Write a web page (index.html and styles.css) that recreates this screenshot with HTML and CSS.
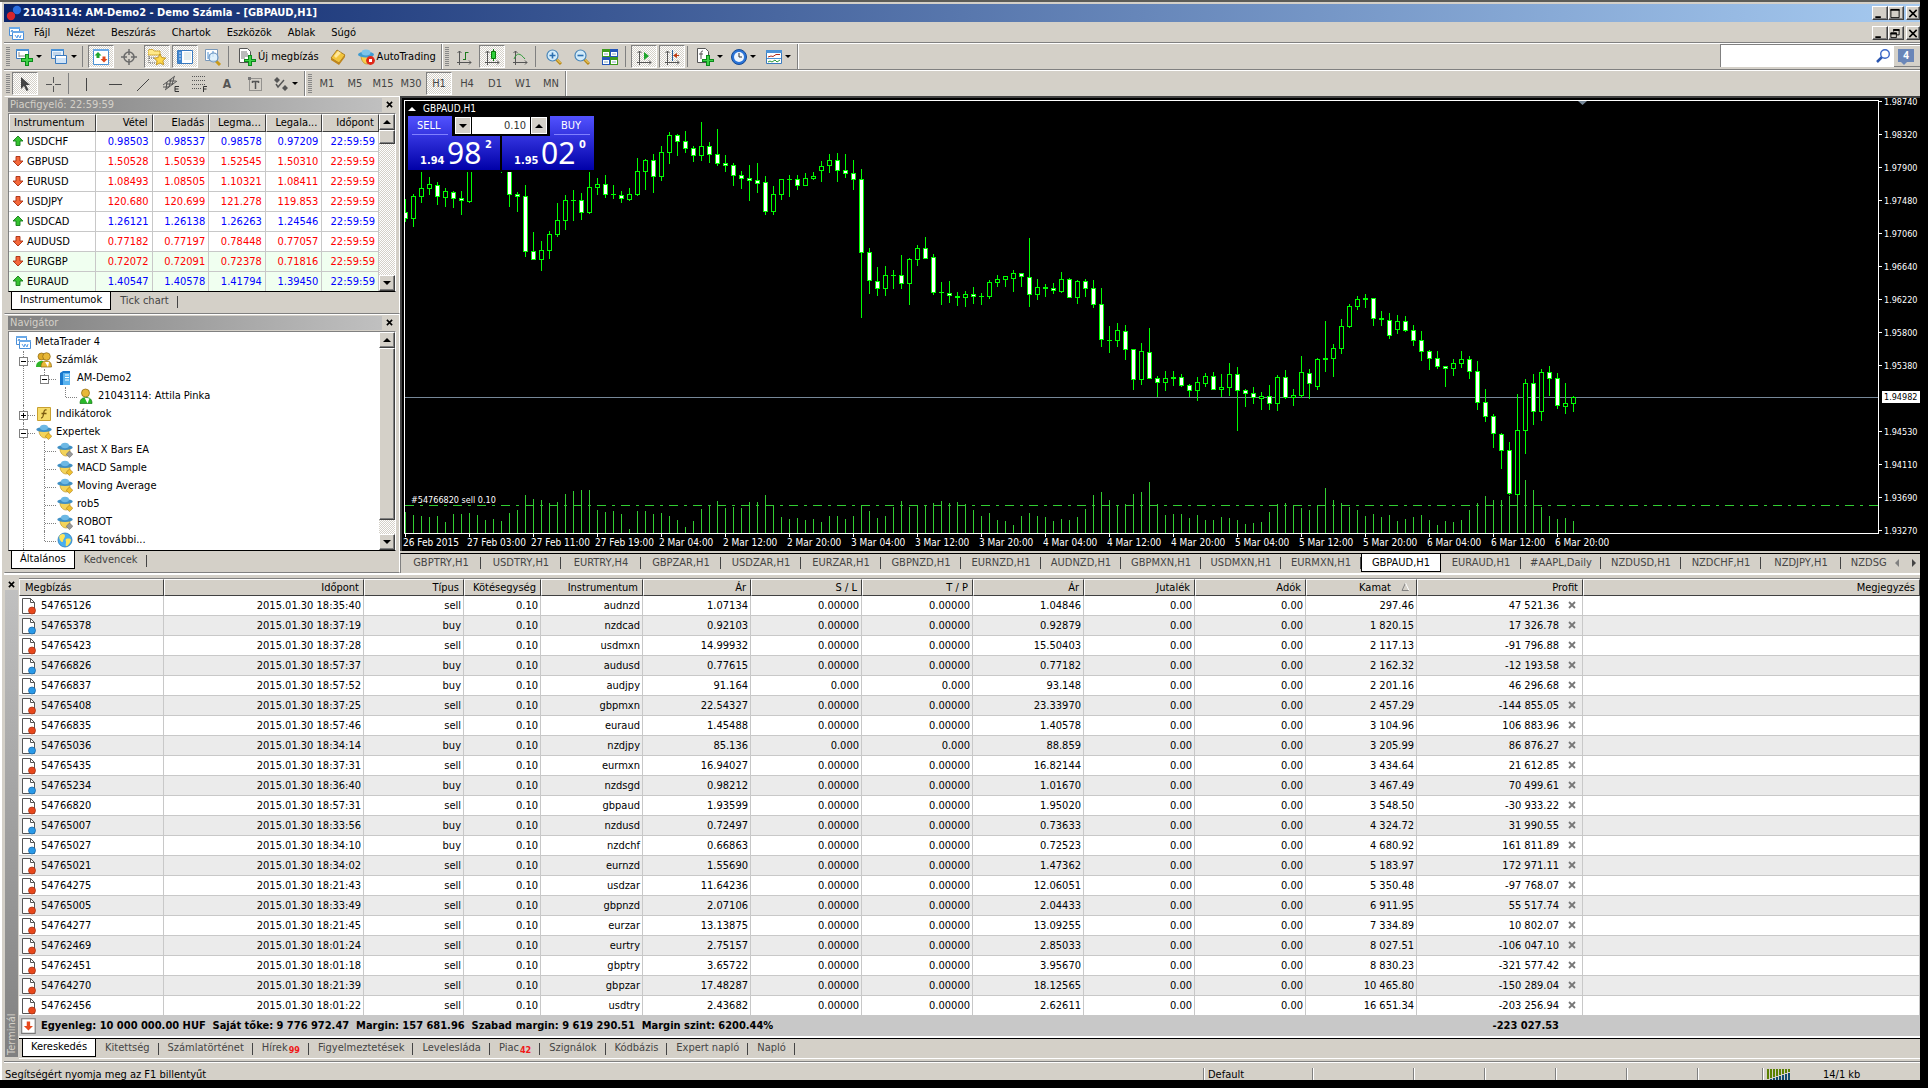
FILE: index.html
```html
<!doctype html>
<html lang="hu">
<head>
<meta charset="UTF-8">
<title>21043114: AM-Demo2 - Demo Számla - [GBPAUD,H1]</title>
<link rel="stylesheet" href="styles.css">
</head>
<body>
<!-- icon set, 16x16 -->
<svg class="sprite" width="0" height="0">
	<symbol id="logo" viewBox="0 0 16 16"><circle cx="11" cy="5" r="4.2" fill="#2a6fe0"/><circle cx="5" cy="11" r="4.2" fill="#d8262c"/></symbol>
	<symbol id="charts" viewBox="0 0 16 16"><path d="M1.5 2.5h10v8h-10z" fill="#fff" stroke="#4a8fd8"/><path d="M1 2h11v2H1z" fill="#6aa9e8"/><path d="M3 7l1-2 2 3 1-2" fill="none" stroke="#4a8fd8"/><path d="M4.5 6.5h11v8h-11z" fill="#fff" stroke="#4a8fd8"/><path d="M4 6h12v2H4z" fill="#6aa9e8"/><path d="M7 10l2 3 1-3 2 3 1-3" fill="none" stroke="#5a9fe8"/></symbol>
	<symbol id="newchart" viewBox="0 0 18 18"><path d="M1.5 1.5h12v9h-12z" fill="#fff" stroke="#3a7abf"/><path d="M1 1h13v2H1z" fill="#4b92d6"/><path d="M4 4v5M4 8h7" stroke="#888" fill="none"/><path d="M10 6h4v4h4v4h-4v4h-4v-4H6v-4h4z" fill="#0a8a1a"/><path d="M11 7h2v4h4v2h-4v4h-2v-4H7v-2h4z" fill="#3fd048"/></symbol>
	<symbol id="profiles" viewBox="0 0 18 18"><path d="M1.5 1.5h12v9h-12z" fill="#e8f3fd" stroke="#3a7abf"/><path d="M1 1h13v2H1z" fill="#4b92d6"/><path d="M3 5h8M3 7h8" stroke="#9ab8d8"/><path d="M5.5 7.5h11v8h-11z" fill="#cfe3f7" stroke="#3a7abf"/><path d="M6 8h10v2H6z" fill="#fff"/></symbol>
	<symbol id="market" viewBox="0 0 16 16"><path d="M.5.5h15v15H.5z" fill="#fff" stroke="#4b92d6"/><path d="M0 0h16v2H0z" fill="#6aa9e8"/><path d="M5 3l3.5 3.5h-2V9h-3V6.500h-2z" fill="#1da52a"/><path d="M11 13.5L7.5 10h2V7.5h3V10h2z" fill="#e0481c"/></symbol>
	<symbol id="data" viewBox="0 0 16 16"><circle cx="8" cy="8" r="5" fill="none" stroke="#6b6b6b" stroke-width="1.5"/><path d="M8 0v6M8 10v6M0 8h6M10 8h6" stroke="#6b6b6b" stroke-width="1.5"/></symbol>
	<symbol id="nav" viewBox="0 0 18 16"><path d="M0 2l1-1.5h4L6 2h6v4H0z" fill="#ffe98a" stroke="#c99a1a" stroke-width=".8"/><path d="M1 7v7h6M1 9h5" stroke="#555" stroke-dasharray="1 1" fill="none"/><path d="M12 5l1.800 3.600 4 .5-2.900 2.700.8 4L12 14l-3.700 1.800.8-4L6.200 9.100l4-.5z" fill="#ffd84a" stroke="#b8860b" stroke-width=".8"/></symbol>
	<symbol id="terminal" viewBox="0 0 16 16"><path d="M.5 1.5h15v13H.5z" fill="#fff" stroke="#3a7abf"/><path d="M1 2h4v12H1z" fill="#3f86d0"/><path d="M7 4h7M7 6h7M7 8h7M7 10h7" stroke="#cdd"/><path d="M2 4h2M2 7h2M2 10h2" stroke="#cfe3f7"/></symbol>
	<symbol id="tester" viewBox="0 0 18 18"><path d="M1.5 1.5h12v11h-12z" fill="#fff" stroke="#7a98b8"/><path d="M4 11V4M6 10V6M9 9V3" stroke="#4b92d6"/><path d="M12 13l4 4" stroke="#c99a1a" stroke-width="3"/><circle cx="9.5" cy="9.5" r="4.5" fill="#d8edfb" fill-opacity=".8" stroke="#6a94c0" stroke-width="1.2"/></symbol>
	<symbol id="order" viewBox="0 0 18 18"><path d="M1.5.5h8l3 3v11h-11z" fill="#fff" stroke="#555"/><path d="M3 4h6M3 6h7M3 8h7M3 10h4" stroke="#777"/><path d="M10 7h4v4h4v3h-4v4h-4v-4H6v-3h4z" fill="#0a8a1a"/><path d="M11 8h2v4h4v1h-4v4h-2v-4H7v-1h4z" fill="#3fd048"/></symbol>
	<symbol id="book" viewBox="0 0 16 16"><path d="M1 9l6-8 8 5-6 8z" fill="#f3c53c" stroke="#9a6a10" stroke-width=".8"/><path d="M1 9l8 5 6-8v2l-6 8-8-5z" fill="#c08418"/><path d="M4 7l4-5 3 2-5 5z" fill="#ffe79a"/></symbol>
	<symbol id="auto" viewBox="0 0 18 16"><path d="M4 6c0 6 3 9 6 9s5-3 5-9z" fill="#f6cf4e" stroke="#b98a1a" stroke-width=".7"/><ellipse cx="9" cy="5.5" rx="8" ry="3" fill="#3f9bd0"/><ellipse cx="9" cy="3.5" rx="4.5" ry="3" fill="#7cc4ea"/><circle cx="13.5" cy="11.5" r="4.4" fill="#e02818"/><path d="M12 10h3v3h-3z" fill="#fff"/></symbol>
	<symbol id="bars" viewBox="0 0 16 16"><path d="M3.5 2v14M1 13.5h14M1.5 4l2-2 2 2M13 11.5l2 2-2 2" fill="none" stroke="#555"/><path d="M9.5 3v8M9.5 3.5h3M7 10.5h3" stroke="#1c7a1c" fill="none"/></symbol>
	<symbol id="candles" viewBox="0 0 16 16"><path d="M3.5 2v14M1 13.5h14M1.5 4l2-2 2 2M13 11.5l2 2-2 2" fill="none" stroke="#555"/><path d="M9.5 0v12" stroke="#0a7a0a"/><path d="M7.5 2.5h4v7h-4z" fill="#2fd03a" stroke="#0a7a0a"/></symbol>
	<symbol id="line" viewBox="0 0 16 16"><path d="M3.5 2v14M1 13.5h14M1.5 4l2-2 2 2M13 11.5l2 2-2 2" fill="none" stroke="#555"/><path d="M2 10c3-7 6-6 11 0" fill="none" stroke="#2c9a35"/></symbol>
	<symbol id="zoomin" viewBox="0 0 16 16"><path d="M10 10l5 5" stroke="#b98a1a" stroke-width="3"/><path d="M10.5 10l4 4" stroke="#ffe27a"/><circle cx="6.5" cy="6.5" r="5.5" fill="#d3ecfb" stroke="#4a86b8" stroke-width="1.2"/><path d="M3.5 6.5h6M6.5 3.5v6" stroke="#2a6fb0" stroke-width="1.6"/></symbol>
	<symbol id="zoomout" viewBox="0 0 16 16"><path d="M10 10l5 5" stroke="#b98a1a" stroke-width="3"/><path d="M10.5 10l4 4" stroke="#ffe27a"/><circle cx="6.5" cy="6.5" r="5.5" fill="#d3ecfb" stroke="#4a86b8" stroke-width="1.2"/><path d="M3.5 6.5h6" stroke="#2a6fb0" stroke-width="1.6"/></symbol>
	<symbol id="tile" viewBox="0 0 16 16"><path d="M0 0h8v8H0zM8 8h8v8H8z" fill="#3c9a1e"/><path d="M8 0h8v8H8zM0 8h8v8H0z" fill="#2456b8"/><path d="M1 3h6v4H1zM9 3h6v4H9zM1 11h6v4H1zM9 11h6v4H9z" fill="#fff"/><path d="M2 5h4M10 5h4M2 13h4M10 13h4" stroke="#8ab"/></symbol>
	<symbol id="scroll" viewBox="0 0 16 16"><path d="M3.5 2v14M1 13.5h14M1.5 4l2-2 2 2M13 11.5l2 2-2 2" fill="none" stroke="#555"/><path d="M8 3l5 4-5 4z" fill="#1da52a"/></symbol>
	<symbol id="shift" viewBox="0 0 16 16"><path d="M3.5 2v14M1 13.5h14M1.5 4l2-2 2 2M13 11.5l2 2-2 2" fill="none" stroke="#555"/><path d="M8.5 1v11" stroke="#2a5f9a"/><path d="M15 6.5h-3" stroke="#c03a10"/><path d="M13 4l-4 2.500 4 2.500z" fill="#c03a10"/></symbol>
	<symbol id="indicators" viewBox="0 0 18 18"><path d="M1.5.5h8l3 3v11h-11z" fill="#fff" stroke="#555"/><path d="M7 3c-2 0-2 1-2 3v5M3 6h4" fill="none" stroke="#555"/><path d="M10 7h4v4h4v3h-4v4h-4v-4H6v-3h4z" fill="#0a8a1a"/><path d="M11 8h2v4h4v1h-4v4h-2v-4H7v-1h4z" fill="#3fd048"/></symbol>
	<symbol id="clock" viewBox="0 0 16 16"><circle cx="8" cy="8" r="7.5" fill="#2a74d8" stroke="#164a94"/><circle cx="8" cy="8" r="5" fill="#eef6ff"/><path d="M8 4v4h3" fill="none" stroke="#333"/></symbol>
	<symbol id="template" viewBox="0 0 16 16"><path d="M.5 1.5h15v13H.5z" fill="#fff" stroke="#3a7abf"/><path d="M0 1h16v3H0z" fill="#4b92d6"/><path d="M2 8l3-1 2 .5 3-2h4" fill="none" stroke="#b02a1a"/><path d="M1 9.5h14" stroke="#4b92d6"/><path d="M2 13l2-1 2 1 3-2 2 2 3-2" fill="none" stroke="#2c9a35"/></symbol>
	<symbol id="pointer" viewBox="0 0 16 16"><path d="M4 1v12l3-3 2.500 5 2-1L9 9h4z" fill="#444"/></symbol>
	<symbol id="cross" viewBox="0 0 16 16"><path d="M8.5 1v6M8.5 10v6M1 8.5h6M10 8.5h6" stroke="#555"/></symbol>
	<symbol id="vline" viewBox="0 0 16 16"><path d="M7.5 2v13" stroke="#444"/></symbol>
	<symbol id="hline" viewBox="0 0 16 16"><path d="M2 8.5h13" stroke="#444"/></symbol>
	<symbol id="trend" viewBox="0 0 16 16"><path d="M2 15L14 3" stroke="#444"/></symbol>
	<symbol id="channel" viewBox="0 0 18 18"><path d="M1 10L13 1M3 15L15 6M4 14l1-7M7 12l2-8M10 10l2-8M1 12h6M4 9h7M7 6h7" stroke="#555"/><path d="M17 11.5h-4v5h4M13 14h3.5" fill="none" stroke="#333"/></symbol>
	<symbol id="fibo" viewBox="0 0 18 18"><path d="M2 1.5h14M2 5.5h14M2 9.5h14M2 13.5h9" stroke="#555" stroke-dasharray="1 1"/><path d="M13.5 17v-5.5H17M13 14h3.5" fill="none" stroke="#333"/></symbol>
	<symbol id="label" viewBox="0 0 16 16"><path d="M2.5 2.5h12v12h-12z" fill="none" stroke="#555" stroke-dasharray="1 1"/><path d="M1 1h3v3H1z" fill="#777"/><path d="M5 5.5h7M8.5 5v8M5.5 5v2M11.5 5v2" stroke="#555" stroke-width="1.5"/></symbol>
	<symbol id="arrows" viewBox="0 0 16 16"><path d="M1 4l3-3 3 3-3 3zM9 12l3-3 3 3-3 3z" fill="#555"/><path d="M3 8l2 3 6-7" stroke="#555" fill="none" stroke-width="1.4"/></symbol>
	<symbol id="up" viewBox="0 0 12 12"><path d="M6 1l5 5H8v4.500H4V6H1z" fill="#35c22f" stroke="#157a1a" stroke-width=".9"/></symbol>
	<symbol id="down" viewBox="0 0 12 12"><path d="M6 11L1 6h3V1.500h4V6h3z" fill="#f4683a" stroke="#a82c10" stroke-width=".9"/></symbol>
	<symbol id="users" viewBox="0 0 16 16"><path d="M0 15c0-4 2-5 4-6h3v6z" fill="#2fb52a"/><circle cx="5.5" cy="4.5" r="3.5" fill="#e0ac28" stroke="#8a6410" stroke-width=".7"/><path d="M5 15c0-5 2-6 5.500-6s5 2 5 6z" fill="#e8b838" stroke="#8a6410" stroke-width=".7"/><circle cx="10.5" cy="4.5" r="3.8" fill="#e8b838" stroke="#8a6410" stroke-width=".7"/><path d="M9 10l3 5 1-5z" fill="#fff"/></symbol>
	<symbol id="server" viewBox="0 0 16 16"><path d="M3 3l3-2h7v12l-2 2H3z" fill="#1a78cc"/><path d="M6 3h7v12H6z" fill="#5ab4f0"/><path d="M8 5h4M8 7.5h4M8 10h4" stroke="#fff"/></symbol>
	<symbol id="user" viewBox="0 0 16 16"><path d="M2 15.5c0-4 2-6 6-6s6 2 6 6z" fill="#28b828" stroke="#147a14" stroke-width=".7"/><path d="M6.5 9.5l3 6 2-5z" fill="#fff"/><circle cx="7.5" cy="5" r="4" fill="#e8b838" stroke="#8a6410" stroke-width=".7"/></symbol>
	<symbol id="func" viewBox="0 0 16 16"><path d="M1.5 1.5h13v13h-13z" fill="#f6dc6a" stroke="#c8a030"/><path d="M10.5 4c-2-.5-2.500.5-3 4s-1 4-2.500 4M5.500 7.500h5" fill="none" stroke="#7a5a10" stroke-width="1.3"/></symbol>
	<symbol id="expert" viewBox="0 0 16 16"><path d="M3 7c0 4 3 7 6 7s4-3 4-7z" fill="#f3d35a" stroke="#b98a1a" stroke-width=".6"/><ellipse cx="8" cy="5.5" rx="7.7" ry="2.5" fill="#3f8fc4"/><ellipse cx="8" cy="3.5" rx="4" ry="2.7" fill="#6cb8e4"/><path d="M12.500 9l3.300 3.300-3.300 3.300-3.300-3.300z" fill="#f0c030" stroke="#a87a10" stroke-width=".6"/></symbol>
	<symbol id="expert-off" viewBox="0 0 16 16"><path d="M3 7c0 4 3 7 6 7s4-3 4-7z" fill="#f3d35a" stroke="#b98a1a" stroke-width=".6"/><ellipse cx="8" cy="5.5" rx="7.7" ry="2.5" fill="#3f8fc4"/><ellipse cx="8" cy="3.5" rx="4" ry="2.7" fill="#6cb8e4"/><path d="M12.500 9l3.300 3.300-3.300 3.300-3.300-3.300z" fill="#999" stroke="#666" stroke-width=".6"/></symbol>
	<symbol id="globe" viewBox="0 0 16 16"><circle cx="8" cy="8" r="7" fill="#48aef0" stroke="#2a7ab8" stroke-width=".8"/><path d="M3 3c3-2 5-1 5 1S6 7 6 9s-2 1-3-1-1-4 0-5zM9 7c3-1 5 0 5 1s-2 5-4 6-1-3-1-4-1-2 0-3z" fill="#ffe45a"/></symbol>
	<symbol id="folder" viewBox="0 0 16 16"><path d="M1 1h10v5H1z" fill="#d8a030"/></symbol>
	<symbol id="sell" viewBox="0 0 16 18"><path d="M1.5 1.5h8l4 4v11h-12z" fill="#fff" stroke="#555"/><path d="M9.5 1.5v4h4" fill="none" stroke="#555"/><circle cx="11" cy="13.5" r="3.5" fill="#e8481c" stroke="#a02c10" stroke-width=".7"/></symbol>
	<symbol id="buy" viewBox="0 0 16 18"><path d="M1.5 1.5h8l4 4v11h-12z" fill="#fff" stroke="#555"/><path d="M9.5 1.5v4h4" fill="none" stroke="#555"/><circle cx="11" cy="13.5" r="3.5" fill="#2a9ae8" stroke="#1460a0" stroke-width=".7"/></symbol>
	<symbol id="balance" viewBox="0 0 14 16"><path d="M.5 1.5h12v13H.5z" fill="#fff" stroke="#777"/><path d="M6.500 12l-4-4H5V4h3v4h2.500z" fill="#e8481c"/></symbol>
	<symbol id="search" viewBox="0 0 16 16"><path d="M7 9l-5 5" stroke="#2a56b0" stroke-width="2.5"/><circle cx="10" cy="6" r="4.3" fill="#fff" stroke="#3a66c8" stroke-width="1.4"/></symbol>
	<symbol id="x" viewBox="0 0 8 8"><path d="M1 1l6 6M7 1L1 7" stroke="currentColor" stroke-width="1.8"/></symbol>
	<symbol id="tri-up" viewBox="0 0 8 8"><path d="M0 6l4-4 4 4z" fill="currentColor"/></symbol>
	<symbol id="tri-down" viewBox="0 0 8 8"><path d="M0 2l4 4 4-4z" fill="currentColor"/></symbol>
	<symbol id="tri-left" viewBox="0 0 8 8"><path d="M6 0L2 4l4 4z" fill="currentColor"/></symbol>
	<symbol id="tri-right" viewBox="0 0 8 8"><path d="M2 0l4 4-4 4z" fill="currentColor"/></symbol>
	<symbol id="sort" viewBox="0 0 9 9"><path d="M4.5 1L1 8.500h7" fill="none" stroke="#808080"/><path d="M4.500 1L8 8.500" stroke="#fff"/></symbol>
	<symbol id="min" viewBox="0 0 12 12"><path d="M2 9h6v2H2z"/></symbol>
	<symbol id="max" viewBox="0 0 12 12"><path d="M1.5 2v8.500h9V2" fill="none" stroke="#000"/><path d="M1 1h10v2H1z"/></symbol>
	<symbol id="restore" viewBox="0 0 12 12"><path d="M4.5 4V2.500h6v5H8M1.500 5.500h6v5h-6z" fill="none" stroke="#000"/><path d="M4 1h7v2H4zM1 5h7v2H1z"/></symbol>
	<symbol id="close" viewBox="0 0 12 12"><path d="M2 2l8 8M10 2l-8 8" stroke="#000" stroke-width="1.7"/></symbol>
</svg>

<div class="app">
	<header class="titlebar">
		<svg class="ico"><use href="#logo"/></svg>
		<h1>21043114: AM-Demo2 - Demo Számla - [GBPAUD,H1]</h1>
		<div class="winbtns">
			<button aria-label="Kis méret"><svg><use href="#min"/></svg></button>
			<button aria-label="Teljes méret"><svg><use href="#max"/></svg></button>
			<button aria-label="Bezárás"><svg><use href="#close"/></svg></button>
		</div>
	</header>
	<nav class="menu">
		<svg class="ico"><use href="#charts"/></svg>
		<button>Fájl</button><button>Nézet</button><button>Beszúrás</button><button>Chartok</button><button>Eszközök</button><button>Ablak</button><button>Súgó</button>
		<div class="winbtns">
			<button aria-label="Kis méret"><svg><use href="#min"/></svg></button>
			<button aria-label="Visszaállítás"><svg><use href="#restore"/></svg></button>
			<button aria-label="Bezárás"><svg><use href="#close"/></svg></button>
		</div>
	</nav>

	<div class="bars">
		<div class="toolbar">
			<div class="group">
				<i class="grip"></i>
				<button class="tool drop" aria-label="Új chart"><svg class="big"><use href="#newchart"/></svg></button>
				<button class="tool drop" aria-label="Profilok"><svg class="big"><use href="#profiles"/></svg></button>
				<i class="sep"></i>
				<button class="tool on" aria-label="Piacfigyelő"><svg><use href="#market"/></svg></button>
				<button class="tool" aria-label="Adatablak"><svg><use href="#data"/></svg></button>
				<button class="tool on" aria-label="Navigátor"><svg class="big"><use href="#nav"/></svg></button>
				<button class="tool on" aria-label="Terminál"><svg><use href="#terminal"/></svg></button>
				<button class="tool" aria-label="Tesztelő"><svg class="big"><use href="#tester"/></svg></button>
				<i class="sep"></i>
				<button class="tool text"><svg class="big"><use href="#order"/></svg>Új megbízás</button>
				<button class="tool" aria-label="MetaEditor"><svg><use href="#book"/></svg></button>
				<button class="tool text"><svg class="big"><use href="#auto"/></svg>AutoTrading</button>
			</div>
			<div class="group">
				<i class="grip"></i>
				<button class="tool" aria-label="Oszlopok"><svg><use href="#bars"/></svg></button>
				<button class="tool on" aria-label="Gyertyák"><svg><use href="#candles"/></svg></button>
				<button class="tool" aria-label="Vonal"><svg><use href="#line"/></svg></button>
				<i class="sep"></i>
				<button class="tool" aria-label="Nagyítás"><svg><use href="#zoomin"/></svg></button>
				<button class="tool" aria-label="Kicsinyítés"><svg><use href="#zoomout"/></svg></button>
				<button class="tool" aria-label="Mozaik"><svg><use href="#tile"/></svg></button>
				<i class="sep"></i>
				<button class="tool on" aria-label="Automata görgetés"><svg><use href="#scroll"/></svg></button>
				<button class="tool on" aria-label="Chart eltolás"><svg><use href="#shift"/></svg></button>
				<i class="sep"></i>
				<button class="tool drop" aria-label="Indikátorok"><svg class="big"><use href="#indicators"/></svg></button>
				<button class="tool drop" aria-label="Időtávok"><svg><use href="#clock"/></svg></button>
				<button class="tool drop" aria-label="Sablonok"><svg><use href="#template"/></svg></button>
			</div>
			<div class="search">
				<input type="text" aria-label="Keresés">
				<svg class="ico"><use href="#search"/></svg>
				<button class="chat"><span>4</span></button>
			</div>
		</div>
		<div class="toolbar">
			<div class="group">
				<i class="grip"></i>
				<button class="tool on" aria-label="Kurzor"><svg><use href="#pointer"/></svg></button>
				<button class="tool" aria-label="Célkereszt"><svg><use href="#cross"/></svg></button>
				<i class="sep"></i>
				<button class="tool" aria-label="Függőleges vonal"><svg><use href="#vline"/></svg></button>
				<button class="tool" aria-label="Vízszintes vonal"><svg><use href="#hline"/></svg></button>
				<button class="tool" aria-label="Trendvonal"><svg><use href="#trend"/></svg></button>
				<button class="tool" aria-label="Csatorna"><svg class="big"><use href="#channel"/></svg></button>
				<button class="tool" aria-label="Fibonacci"><svg class="big"><use href="#fibo"/></svg></button>
				<button class="tool letter">A</button>
				<button class="tool" aria-label="Felirat"><svg><use href="#label"/></svg></button>
				<button class="tool drop" aria-label="Nyilak"><svg><use href="#arrows"/></svg></button>
			</div>
			<div class="group periods">
				<i class="grip"></i>
				<button class="tool">M1</button><button class="tool">M5</button><button class="tool">M15</button><button class="tool">M30</button><button class="tool on">H1</button><button class="tool">H4</button><button class="tool">D1</button><button class="tool">W1</button><button class="tool">MN</button>
			</div>
		</div>
	</div>

	<div class="workspace">
		<aside class="dock">
			<section class="panel">
				<header class="caption"><h2>Piacfigyelő: 22:59:59</h2><button aria-label="Bezárás"><svg><use href="#x"/></svg></button></header>
				<div class="well">
					<table class="quotes">
						<colgroup><col class="sym"><col><col><col><col><col></colgroup>
						<thead><tr><th>Instrumentum</th><th>Vétel</th><th>Eladás</th><th>Legma...</th><th>Legala...</th><th>Időpont</th></tr></thead>
						<tbody id="quotes"></tbody>
					</table>
					<div class="scrollbar"><button aria-label="Fel"><svg><use href="#tri-up"/></svg></button><i class="thumb small"></i><button class="end" aria-label="Le"><svg><use href="#tri-down"/></svg></button></div>
				</div>
				<div class="tabs"><button class="active">Instrumentumok</button><button>Tick chart</button></div>
			</section>
			<section class="panel grow">
				<header class="caption"><h2>Navigátor</h2><button aria-label="Bezárás"><svg><use href="#x"/></svg></button></header>
				<div class="well">
					<div class="tree">
						<div class="node"><svg class="ico"><use href="#charts"/></svg>MetaTrader 4</div>
						<ul>
							<li><div class="node"><button class="exp" aria-label="Bezár"></button><svg class="ico"><use href="#users"/></svg>Számlák</div>
								<ul>
									<li><div class="node"><button class="exp" aria-label="Bezár"></button><svg class="ico"><use href="#server"/></svg>AM-Demo2</div>
										<ul><li><div class="node"><svg class="ico"><use href="#user"/></svg>21043114: Attila Pinka</div></li></ul>
									</li>
								</ul>
							</li>
							<li><div class="node"><button class="exp plus" aria-label="Kinyit"></button><svg class="ico"><use href="#func"/></svg>Indikátorok</div></li>
							<li><div class="node"><button class="exp" aria-label="Bezár"></button><svg class="ico"><use href="#expert"/></svg>Expertek</div>
								<ul>
									<li><div class="node"><svg class="ico"><use href="#expert-off"/></svg>Last X Bars EA</div></li>
									<li><div class="node"><svg class="ico"><use href="#expert"/></svg>MACD Sample</div></li>
									<li><div class="node"><svg class="ico"><use href="#expert"/></svg>Moving Average</div></li>
									<li><div class="node"><svg class="ico"><use href="#expert"/></svg>rob5</div></li>
									<li><div class="node"><svg class="ico"><use href="#expert-off"/></svg>ROBOT</div></li>
									<li><div class="node"><svg class="ico"><use href="#globe"/></svg>641 további...</div></li>
								</ul>
							</li>
							<li><div class="node"><svg class="ico"><use href="#folder"/></svg></div></li>
						</ul>
					</div>
					<div class="scrollbar"><button aria-label="Fel"><svg><use href="#tri-up"/></svg></button><i class="thumb"></i><button class="end" aria-label="Le"><svg><use href="#tri-down"/></svg></button></div>
				</div>
				<div class="tabs"><button class="active">Általános</button><button>Kedvencek</button></div>
			</section>
		</aside>

		<main class="charts">
			<div class="chart">
				<div class="plot">
					<svg id="plot"></svg>
					<div class="symbol"><svg><use href="#tri-up"/></svg>GBPAUD,H1</div>
					<div class="oneclick">
						<button class="deal sell"><span>SELL</span><b>1.94</b><em>98</em><sup>2</sup></button>
						<button class="deal buy"><span>BUY</span><b>1.95</b><em>02</em><sup>0</sup></button>
						<div class="volume">
							<button aria-label="Kevesebb"><svg><use href="#tri-down"/></svg></button>
							<input type="text" value="0.10" aria-label="Mennyiség">
							<button aria-label="Több"><svg><use href="#tri-up"/></svg></button>
						</div>
					</div>
				</div>
				<svg id="prices"></svg>
				<svg id="times"></svg>
			</div>
			<div class="charttabs">
				<div class="strip" id="charttabs"></div>
				<div class="arrows"><button class="off" aria-label="Balra"><svg><use href="#tri-left"/></svg></button><button aria-label="Jobbra"><svg><use href="#tri-right"/></svg></button></div>
			</div>
		</main>
	</div>

	<section class="terminal">
		<div class="side"><button aria-label="Bezárás"><svg><use href="#x"/></svg></button><h2>Terminál</h2></div>
		<div class="content">
			<table class="trades">
				<colgroup><col class="c1"><col class="c2"><col class="c3"><col class="c4"><col class="c5"><col class="c6"><col class="c7"><col class="c7"><col class="c7"><col class="c7"><col class="c7"><col class="c7"><col class="c8"><col></colgroup>
				<thead><tr><th>Megbízás</th><th>Időpont</th><th>Típus</th><th>Kötésegység</th><th>Instrumentum</th><th>Ár</th><th>S / L</th><th>T / P</th><th>Ár</th><th>Jutalék</th><th>Adók</th><th>Kamat<svg class="sort"><use href="#sort"/></svg></th><th>Profit</th><th>Megjegyzés</th></tr></thead>
				<tbody id="trades"></tbody>
				<tfoot><tr><td colspan="12"><div class="cell"><svg class="ico"><use href="#balance"/></svg>Egyenleg: 10 000 000.00 HUF&nbsp; Saját tőke: 9 776 972.47&nbsp; Margin: 157 681.96&nbsp; Szabad margin: 9 619 290.51&nbsp; Margin szint: 6200.44%</div></td><td class="total">-223 027.53</td><td></td></tr></tfoot>
			</table>
			<div class="tabs"><button class="active">Kereskedés</button><button>Kitettség</button><button>Számlatörténet</button><button>Hírek<sub>99</sub></button><button>Figyelmeztetések</button><button>Levelesláda</button><button>Piac<sub>42</sub></button><button>Szignálok</button><button>Kódbázis</button><button>Expert napló</button><button>Napló</button></div>
		</div>
	</section>

	<footer class="status">
		<span class="help">Segítségért nyomja meg az F1 billentyűt</span>
		<span class="w1">Default</span><span class="w2"></span><span class="w3"></span><span class="w3"></span><span class="w3"></span><span class="w3"></span><span class="w4"></span>
		<span class="net"><svg id="signal"></svg>14/1 kb</span>
	</footer>
</div>
<script src="script.js"></script>
</body>
</html>
```
FILE: styles.css
```css
*{box-sizing:border-box}
body{
	margin:0;
	padding:0 8px 8px 0;
	background:#000;
	color:#000;
	font:11px/14px "DejaVu Sans Condensed","Noto Sans",sans-serif;
}
button,input{font:inherit;color:inherit;margin:0;padding:0;border:0;background:none;border-radius:0}
h1,h2,ul{margin:0;padding:0;font:inherit;list-style:none}
.sprite{display:block;position:absolute}
.ico{width:16px;height:16px;flex:none}
.app{
	height:calc(100vh - 8px);
	min-height:1000px;
	display:flex;
	flex-direction:column;
	background:#d4d0c8;
	border-top:2px solid #5c5c58;
	padding:2px 0 0 4px;
	box-shadow:inset 2px 0 0 #fff;
	overflow:hidden;
}

/* title and menu */
.titlebar{
	height:18px;
	flex:none;
	display:flex;
	align-items:center;
	padding-left:2px;
	background:linear-gradient(90deg,#0a246a,#a6caf0);
	color:#fff;
	font-weight:bold;
}
.titlebar h1{flex:1;padding-left:1px}
.winbtns{display:flex;margin-left:auto}
.winbtns button{
	width:16px;height:14px;
	background:#d4d0c8;
	border:1px solid;
	border-color:#fff #404040 #404040 #fff;
	box-shadow:inset -1px -1px #808080;
}
.winbtns button:last-child{margin-left:2px;width:14px}
.winbtns svg{display:block;width:12px;height:11px}
.menu{height:20px;flex:none;display:flex;align-items:center;padding:2px 0 0 4px}
.menu .ico{margin-right:2px}
.menu>button{padding:0 8px}

/* toolbars */
.bars{flex:none;border-top:1px solid #808080}
.toolbar{display:flex;height:27px;border-top:1px solid #fff;border-bottom:1px solid #808080}
.toolbar:last-child{height:26px;border-bottom:0}
.group{
	display:flex;
	align-items:center;
	gap:2px;
	padding:0 1px 0 2px;
	border-right:1px solid #808080;
	box-shadow:1px 0 #fff;
	margin-right:1px;
}
.grip{width:4px;height:20px;background:repeating-linear-gradient(#888 0 1px,#d4d0c8 1px 2px)}
.sep{width:1px;height:21px;background:#808080;margin-right:3px}
.tool{
	width:26px;height:23px;
	display:flex;
	align-items:center;
	justify-content:center;
	border:1px solid transparent;
}
.tool svg{width:16px;height:16px;flex:none}
.tool svg.big{width:18px;height:18px}
.tool.on{
	border-color:#808080 #fff #fff #808080;
	background:repeating-conic-gradient(#fff 0 25%,#d4d0c8 0 50%) 0 0/2px 2px;
}
.tool.text{width:auto;padding:0 3px;gap:2px}
.tool.drop{width:33px;justify-content:flex-start;padding-left:2px;gap:3px}
.tool.drop:after{content:"";border:3px solid transparent;border-top-color:#000;border-bottom:0}
.tool.letter{font-weight:bold;font-size:12px;color:#555}
.periods{color:#444}
.search{
	margin-left:auto;
	display:flex;
	align-items:center;
	width:200px;height:23px;
	background:#fff;
	border-left:1px solid #808080;
	border-top:1px solid #808080;
}
.search input{flex:1;min-width:0;outline:0}
.search .ico{margin-right:3px}
.chat{width:26px;height:21px;background:#d4d0c8;border-bottom:1px solid #808080;padding:2px 4px}
.chat span{display:block;position:relative;width:16px;height:13px;background:#6a86b8;color:#fff;font:bold 10px/13px "Noto Sans",sans-serif}
.chat span:after{content:"";position:absolute;left:3px;top:13px;border:3px solid transparent;border-top-color:#6a86b8;border-bottom:0}

/* docked panels */
.workspace{flex:1;min-height:0;display:flex;border-bottom:2px solid #fff}
.dock{width:396px;flex:none;display:flex;flex-direction:column}
.panel{
	display:flex;
	flex-direction:column;
	padding:1px 3px;
	border:1px solid #808080;
	border-color:#fff #fff #808080 transparent;
}
.grow{flex:1;min-height:0}
.caption{display:flex;height:14px;margin-bottom:1px}
.caption h2{
	flex:1;
	padding-left:2px;
	color:#d4d0c8;
	background:linear-gradient(90deg,#808080,#c0c0c0);
}
.caption button{width:14px}
.caption svg{width:7px;height:7px}
.well{
	flex:1;
	min-height:0;
	display:flex;
	background:#fff;
	border:1px solid #808080;
	border-right-color:#fff;
	border-bottom-color:#000;
}
table{border-collapse:separate;border-spacing:0;table-layout:fixed}
th,td{white-space:nowrap;overflow:hidden;text-align:right;padding:0 2px;font-weight:normal}
th:first-child,td:first-child{text-align:left}
th{
	height:17px;
	line-height:14px;
	background:#d4d0c8;
	border:1px solid;
	border-color:#fff #404040 #404040 #fff;
}
.quotes{width:372px;flex:1}
.sym{width:87px}
.quotes th{height:18px;padding:0 4px}
.quotes td{height:20px;padding:0 3px;border-right:1px solid #c8c8c8;border-bottom:1px solid #c8c8c8}
.quotes tr:last-child td{height:19px;border-bottom:0}
.quotes .up td{color:#00f}
.quotes .down td{color:#f00}
.quotes tr td:first-child{color:#000}
.quotes .tint{background:#f0fff0}
.quotes svg{width:12px;height:12px;vertical-align:-2px;margin-right:3px}
.scrollbar{
	width:16px;flex:none;
	display:flex;
	flex-direction:column;
	background:repeating-conic-gradient(#fff 0 25%,#d4d0c8 0 50%) 0 0/2px 2px;
}
.scrollbar button,.thumb{
	height:16px;flex:none;
	background:#d4d0c8;
	border:1px solid;
	border-color:#fff #404040 #404040 #fff;
	box-shadow:inset -1px -1px #808080;
}
.scrollbar svg{display:block;width:8px;height:8px;margin:auto}
.thumb{height:79%}
.thumb.small{height:14px}
.scrollbar .end{margin-top:auto}

/* tab strips */
.tabs{display:flex;height:20px;padding-left:3px;align-items:flex-start;color:#444}
.tabs button{padding:0 9px;height:18px;position:relative;white-space:nowrap}
.tabs button:not(.active):after{content:"";position:absolute;right:0;top:4px;width:1px;height:12px;background:#444}
.tabs .active{background:#fff;color:#000;border:1px solid #000;border-top:0;padding:0 8px 2px}
.tabs sub{color:#f01818;font:bold 9px/9px "DejaVu Sans Condensed",sans-serif;vertical-align:-2px;margin-left:1px}

/* navigator tree */
.tree{flex:1;overflow:hidden;padding:1px 0 0 6px}
.node{position:relative;display:flex;align-items:center;gap:4px;height:18px}
.tree ul{margin-left:8px}
.tree li{position:relative;padding-left:13px}
.tree li:before{content:"";position:absolute;left:0;top:0;bottom:0;border-left:1px dotted #808080}
.tree li:last-child:before{bottom:auto;height:10px}
.tree li>.node:before{content:"";position:absolute;left:-12px;width:11px;top:10px;border-top:1px dotted #808080}
.exp{
	position:absolute;
	left:-17px;top:6px;
	width:9px;height:9px;
	background:linear-gradient(#000,#000) center/5px 1px no-repeat,#fff;
	border:1px solid #808080;
}
.exp.plus{background:linear-gradient(#000,#000) center/5px 1px no-repeat,linear-gradient(#000,#000) center/1px 5px no-repeat,#fff}

/* chart */
.charts{flex:1;min-width:0;display:flex;flex-direction:column}
.chart{
	flex:1;
	min-height:0;
	display:grid;
	grid-template:minmax(0,1fr) 17px/minmax(0,1fr) 41px;
	background:#000;
	border:2px solid #404040;
	border-width:2px 0 0 2px;
	padding:2px 0 0 2px;
	font-size:10px;
	color:#fff;
}
.plot{position:relative;border:1px solid #fff;overflow:hidden}
.chart svg{display:block}
#plot,#prices,#times{width:100%;height:100%}
#plot,#prices{font-size:9px}
#prices{overflow:visible}
#times{grid-column:1/3;overflow:visible}
.chart text{fill:#fff}
.symbol{position:absolute;left:3px;top:1px;display:flex;align-items:center;gap:7px}
.symbol svg{width:8px;height:8px}
.oneclick{position:absolute;left:3px;top:15px;display:flex;gap:2px;background:#000;padding-bottom:2px}
.deal{
	position:relative;
	width:92px;height:54px;
	display:grid;
	grid-template:20px 34px/39px 36px 1fr;
	color:#fff;
	background:linear-gradient(#5252ff,#0000a8);
	text-align:left;
}
.sell{clip-path:polygon(0 0,44px 0,44px 20px,100% 20px,100% 100%,0 100%)}
.buy{clip-path:polygon(48px 0,100% 0,100% 100%,0 100%,0 20px,48px 20px)}
.deal span{grid-column:1/4;width:36px;height:19px;margin-left:4px;padding:3px 5px;border-bottom:1px solid #8080ff;font-size:11px}
.buy span{margin-left:52px;padding-left:7px}
.deal b{align-self:end;padding:0 0 2px 12px;font-size:11px}
.deal em{font:30px/33px "Noto Sans",sans-serif}
.deal sup{font:bold 11px/14px "DejaVu Sans Condensed",sans-serif;padding:2px 0 0 2px}
.volume{position:absolute;left:47px;top:1px;display:flex;gap:1px;height:17px}
.volume button{width:16px;background:#d4d0c8;color:#000;border:1px solid #fff}
.volume svg{width:8px;height:8px;margin:auto}
.volume input{width:58px;background:#fff;color:#333;text-align:right;padding-right:4px;font-size:11px}

/* chart tabs */
.charttabs{display:flex;flex:none;height:20px;margin-top:2px;border-top:1px solid #000;border-left:1px solid #808080;color:#444}
.strip{flex:1;min-width:0;display:flex;overflow:hidden}
.strip button{position:relative;min-width:80px;height:18px;flex:none;padding:0 9px;white-space:nowrap}
.strip button:after{content:"";position:absolute;right:0;top:3px;width:1px;height:12px;background:#444}
.strip .active{background:#fff;color:#000;border:1px solid #000;border-top:0}
.strip .active:after{display:none}
.arrows{width:33px;display:flex;justify-content:space-between;padding:0 2px 2px 6px}
.arrows svg{display:block;width:8px;height:8px}
.arrows .off{color:#808080}

/* terminal */
.terminal{flex:none;display:flex;border-top:1px solid #d4d0c8;padding-top:2px;border-bottom:1px solid #808080;box-shadow:0 1px #fff}
.side{width:15px;flex:none;display:flex;flex-direction:column;padding:0 1px 4px}
.side button{height:12px}
.side svg{display:block;width:7px;height:7px;margin:0 auto}
.side h2{
	flex:1;
	writing-mode:vertical-rl;
	transform:rotate(180deg);
	color:#d4d0c8;
	background:linear-gradient(0deg,#c0c0c0,#808080);
	line-height:13px;
	padding-top:2px;
}
.content{flex:1;min-width:0;border-top:1px solid #808080}
.trades{width:100%;background:#fff;border-bottom:1px solid #000;padding-bottom:2px}
.c1{width:145px}
.c2{width:200px}
.c3{width:100px}
.c4{width:77px}
.c5{width:102px}
.c6{width:108px}
.c7{width:111px}
.c8{width:166px}
.trades th{padding:0 4px}
.trades th:first-child{padding-left:5px}
.sort{width:9px;height:9px;margin:0 2px 0 10px}
.trades td{height:20px;border-right:1px solid #c8c8c8;border-bottom:1px solid #c8c8c8}
.trades tbody tr:nth-child(even){background:#ebebeb}
.cell{display:flex;align-items:center;gap:4px}
.cell .ico{height:18px}
.trades td .kill{color:#777;width:8px;height:8px;margin:0 4px 0 9px}
.kill svg{width:8px;height:8px;display:block}
.trades tfoot td{background:#c8c8c8;border-color:#c8c8c8;font-weight:bold}
.trades tfoot .total{padding-right:23px}
.terminal .tabs{height:20px;border-bottom:1px solid #fff;margin-bottom:2px}

/* status bar */
.status{flex:none;height:17px;margin-top:1px;display:flex;padding-top:5px;overflow:hidden;white-space:nowrap}
.status span{height:16px;padding-left:4px;border-left:1px solid #808080;box-shadow:inset 1px 0 #fff}
.status .help{flex:1;border:0;box-shadow:none;padding-left:1px}
.w1{width:109px}
.w2{width:101px}
.w3{width:71px}
.w4{width:65px}
.status .net{width:158px;display:flex;gap:32px}
#signal{width:24px;height:12px;margin-top:1px}
```
FILE: script.js
```js
// [name, bid, ask, high, low, direction]
var quotes=[
	["USDCHF","0.98503","0.98537","0.98578","0.97209","up"],
	["GBPUSD","1.50528","1.50539","1.52545","1.50310","down"],
	["EURUSD","1.08493","1.08505","1.10321","1.08411","down"],
	["USDJPY","120.680","120.699","121.278","119.853","down"],
	["USDCAD","1.26121","1.26138","1.26263","1.24546","up"],
	["AUDUSD","0.77182","0.77197","0.78448","0.77057","down"],
	["EURGBP","0.72072","0.72091","0.72378","0.71816","down"],
	["EURAUD","1.40547","1.40578","1.41794","1.39450","up"]
];
document.getElementById("quotes").innerHTML=quotes.map(function(q,i){
	return '<tr class="'+q[5]+(i>5?" tint":"")+'"><td><svg><use href="#'+q[5]+'"/></svg>'+q[0]+'</td><td>'
		+q.slice(1,5).join("</td><td>")+'</td><td>22:59:59</td></tr>';
}).join("");

// ticket, time, type, symbol, open, current, swap, profit
var trades=[
	["54765126","18:35:40","sell","audnzd","1.07134","1.04846","297.46","47 521.36"],
	["54765378","18:37:19","buy","nzdcad","0.92103","0.92879","1 820.15","17 326.78"],
	["54765423","18:37:28","sell","usdmxn","14.99932","15.50403","2 117.13","-91 796.88"],
	["54766826","18:57:37","buy","audusd","0.77615","0.77182","2 162.32","-12 193.58"],
	["54766837","18:57:52","buy","audjpy","91.164","93.148","2 201.16","46 296.68"],
	["54765408","18:37:25","sell","gbpmxn","22.54327","23.33970","2 457.29","-144 855.05"],
	["54766835","18:57:46","sell","euraud","1.45488","1.40578","3 104.96","106 883.96"],
	["54765036","18:34:14","buy","nzdjpy","85.136","88.859","3 205.99","86 876.27"],
	["54765435","18:37:31","sell","eurmxn","16.94027","16.82144","3 434.64","21 612.85"],
	["54765234","18:36:40","buy","nzdsgd","0.98212","1.01670","3 467.49","70 499.61"],
	["54766820","18:57:31","sell","gbpaud","1.93599","1.95020","3 548.50","-30 933.22"],
	["54765007","18:33:56","buy","nzdusd","0.72497","0.73633","4 324.72","31 990.55"],
	["54765027","18:34:10","buy","nzdchf","0.66863","0.72523","4 680.92","161 811.89"],
	["54765021","18:34:02","sell","eurnzd","1.55690","1.47362","5 183.97","172 971.11"],
	["54764275","18:21:43","sell","usdzar","11.64236","12.06051","5 350.48","-97 768.07"],
	["54765005","18:33:49","sell","gbpnzd","2.07106","2.04433","6 911.95","55 517.74"],
	["54764277","18:21:45","sell","eurzar","13.13875","13.09255","7 334.89","10 802.07"],
	["54762469","18:01:24","sell","eurtry","2.75157","2.85033","8 027.51","-106 047.10"],
	["54762451","18:01:18","sell","gbptry","3.65722","3.95670","8 830.23","-321 577.42"],
	["54764270","18:21:39","sell","gbpzar","17.48287","18.12565","10 465.80","-150 289.04"],
	["54762456","18:01:22","sell","usdtry","2.43682","2.62611","16 651.34","-203 256.94"]
];
document.getElementById("trades").innerHTML=trades.map(function(t){
	var zero=t[4].split(".")[1].length==3?"0.000":"0.00000";
	var cells=["2015.01.30 "+t[1],t[2],"0.10",t[3],t[4],zero,zero,t[5],"0.00","0.00",t[6]];
	return '<tr><td><div class="cell"><svg class="ico"><use href="#'+t[2]+'"/></svg>'+t[0]+'</div></td><td>'
		+cells.join("</td><td>")+'</td><td>'+t[7]
		+'<button class="kill" aria-label="Zárás"><svg><use href="#x"/></svg></button></td><td></td></tr>';
}).join("");

var tabs="GBPTRY,H1 USDTRY,H1 EURTRY,H4 GBPZAR,H1 USDZAR,H1 EURZAR,H1 GBPNZD,H1 EURNZD,H1 AUDNZD,H1 GBPMXN,H1 USDMXN,H1 EURMXN,H1 GBPAUD,H1 EURAUD,H1 #AAPL,Daily NZDUSD,H1 NZDCHF,H1 NZDJPY,H1 NZDSGD,H1".split(" ");
document.getElementById("charttabs").innerHTML=tabs.map(function(t){
	return '<button'+(t=="GBPAUD,H1"?' class="active"':'')+'>'+t+'</button>';
}).join("");

// candles: high, body top, body bottom, low, 1 = bearish
var candles=[
[99,112,119,122,1],[94,96,119,127,0],[70,88,97,103,0],[77,84,89,95,0],[82,85,97,105,1],[88,91,98,107,0],[91,92,99,108,1],[91,98,101,115,1],[55,60,102,103,0],[40,45,60,65,1],
[40,45,60,65,0],[40,45,60,65,1],[45,50,60,73,1],[50,60,95,107,1],[92,94,97,112,1],[85,96,152,157,1],[132,151,160,160,1],[141,150,160,171,0],[131,134,151,159,0],[103,120,135,137,0],
[95,100,121,130,0],[90,100,101,121,0],[93,100,113,120,1],[72,87,113,114,0],[78,84,88,95,0],[75,84,95,98,1],[85,94,95,99,0],[91,95,99,103,1],[88,94,100,101,0],[58,71,95,96,0],
[59,60,72,90,0],[54,60,77,93,1],[46,52,77,81,0],[32,35,53,64,0],[34,35,42,56,1],[31,41,49,53,1],[46,48,56,62,1],[22,46,56,61,0],[42,46,55,63,1],[29,54,64,66,1],
[55,63,66,72,1],[63,65,76,86,1],[71,75,79,89,1],[65,78,81,101,1],[63,80,84,93,1],[76,82,112,115,1],[86,94,112,115,0],[79,79,95,100,0],[75,79,80,97,0],[75,79,86,90,1],
[73,78,86,86,0],[72,76,79,80,0],[61,66,71,82,0],[54,60,66,73,0],[53,60,71,82,1],[54,70,74,78,1],[60,73,80,90,1],[69,79,153,218,1],[148,152,181,194,1],[167,181,189,196,1],
[166,175,189,196,0],[170,175,176,189,0],[155,175,184,189,1],[158,159,184,205,0],[145,148,160,166,0],[137,148,159,159,1],[154,157,193,195,1],[182,192,193,205,0],[181,193,196,203,1],[192,196,198,206,1],
[191,194,198,207,0],[187,194,197,204,1],[193,196,197,205,0],[180,182,197,199,0],[175,179,183,187,0],[176,176,180,187,0],[170,173,179,192,0],[173,173,177,187,1],[138,177,195,207,1],[179,187,195,200,0],
[184,187,189,197,1],[183,188,191,194,1],[172,179,192,193,0],[178,179,198,198,1],[180,181,198,204,0],[179,181,189,197,1],[180,188,205,208,1],[188,204,240,247,1],[226,240,241,253,0],[223,230,241,247,0],
[225,231,250,260,1],[249,249,280,290,1],[243,251,280,285,0],[228,252,279,279,1],[276,278,283,297,1],[271,278,283,291,0],[271,277,279,286,1],[274,277,286,287,1],[284,285,291,297,1],[277,282,291,301,0],
[273,276,284,287,0],[272,276,290,290,1],[274,287,290,297,0],[263,274,288,296,0],[267,274,291,331,1],[289,290,294,307,1],[287,293,298,304,1],[292,296,299,310,0],[285,296,304,310,1],[275,277,304,311,0],
[270,277,298,299,1],[289,295,298,306,0],[256,272,296,298,0],[269,273,284,299,1],[258,259,287,290,0],[221,258,260,272,1],[244,248,259,277,0],[219,226,249,254,0],[204,206,227,228,0],[196,199,207,210,0],
[194,198,200,208,1],[198,198,219,226,1],[211,218,220,226,1],[213,220,236,239,1],[215,221,230,234,0],[216,221,231,232,1],[225,230,241,246,1],[231,240,252,261,1],[250,251,259,270,1],[251,258,267,269,1],
[266,266,269,287,1],[259,263,269,276,0],[251,259,264,268,0],[256,259,272,279,1],[261,271,303,310,1],[289,302,317,322,1],[314,316,334,348,1],[333,334,351,369,1],[342,350,394,395,1],[294,330,395,395,0],
[279,283,331,354,0],[274,283,312,325,1],[269,272,312,321,0],[266,272,279,296,1],[273,278,306,309,1],[283,303,307,314,0],[296,297,304,312,0]
];
var volumes=[22,19,18,17,18,12,20,20,21,19,14,15,13,21,24,39,35,34,31,32,40,43,44,44,24,22,23,20,5,23,23,20,21,18,14,7,13,25,29,33,26,27,26,32,32,39,29,17,15,16,
14,15,12,18,18,15,18,29,23,16,18,27,33,27,29,28,31,33,31,32,30,24,18,21,14,13,9,18,21,18,17,13,15,14,17,25,39,42,34,28,30,40,42,52,30,19,20,20,16,19,
14,14,17,16,14,10,11,12,22,30,31,28,26,24,28,46,34,31,27,24,18,20,17,19,13,15,17,19,14,9,13,12,14,24,31,38,34,34,38,50,54,44,27,18,15,16,13];

function rect(x,y,w,h,fill){
	return '<rect x="'+x+'" y="'+y+'" width="'+w+'" height="'+h+'" fill="'+fill+'"/>';
}
var out='<path d="M0 404.5H3000" stroke="#32cd32" stroke-dasharray="9 6 3 6"/>';
out+=rect(0,296,"100%",1,"#778899");
volumes.forEach(function(v,i){
	out+=rect(i*8,433-v,1,v,"#32cd32");
});
candles.forEach(function(c,i){
	var x=i*8,h=c[2]-c[1];
	out+=rect(x,c[0]-1,1,Math.max(c[3]-c[0],1),"#0f0");
	out+=rect(x-2,c[1]-1,5,h,"#0f0");
	if(h>2) out+=rect(x-1,c[1],3,h-2,c[4]?"#fff":"#000");
});
out+='<text x="6" y="402">#54766820 sell 0.10</text>';
out+='<path d="M1173 0h9l-4.500 4z" fill="#778899"/>';
document.getElementById("plot").innerHTML=out;

// price scale, 33px per step
var prices=["1.98740","1.98320","1.97900","1.97480","1.97060","1.96640","1.96220","1.95800","1.95380","","1.94530","1.94110","1.93690","1.93270"];
out="";
prices.forEach(function(p,i){
	if(!p) return;
	out+=rect(0,1+i*33,3,1,"#fff")+'<text x="5" y="'+(5+i*33)+'">'+p+'</text>';
});
out+=rect(3,291,38,12,"#fff")+'<text x="5" y="300" style="fill:#000">1.94982</text>';
document.getElementById("prices").innerHTML=out;

// time scale, 8 bars per label
var times=["26 Feb 2015","27 Feb 03:00","27 Feb 11:00","27 Feb 19:00"];
[2,3,4,5,6].forEach(function(d){
	["04","12","20"].forEach(function(h){
		times.push(d+" Mar "+h+":00");
	});
});
out="";
times.forEach(function(t,i){
	out+=rect(1+i*64,0,1,3,"#fff")+'<text x="'+(i*64-1)+'" y="12">'+t+'</text>';
});
document.getElementById("times").innerHTML=out;

// connection indicator
out="";
for(var i=0;i<9;i++){
	out+=rect(i*3,0,2,Math.max(10-i,2),"#5a8000")+rect(i*3,Math.max(11-i,3),2,12,"#104a70");
}
document.getElementById("signal").innerHTML=out;
```
